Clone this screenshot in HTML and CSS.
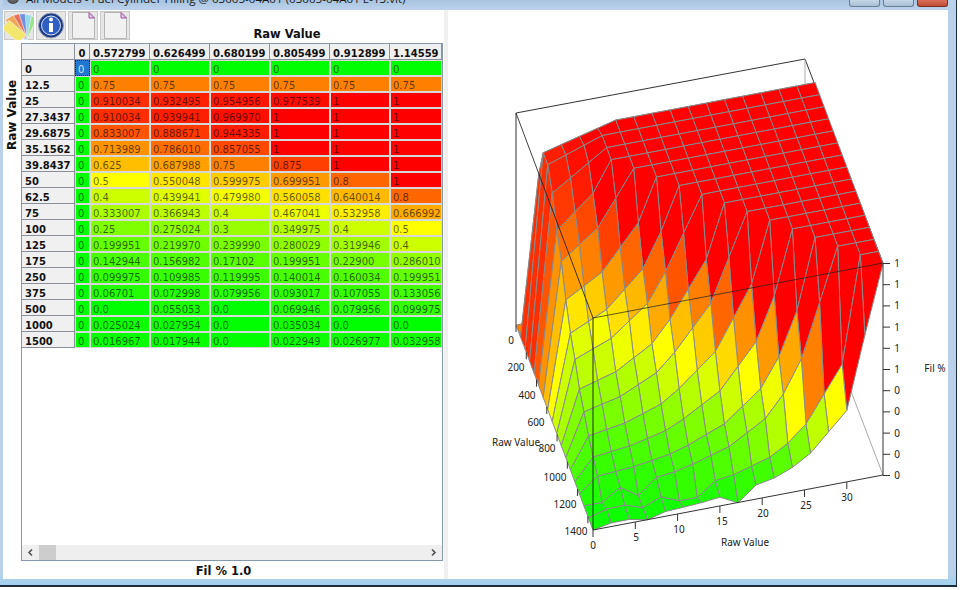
FILE: index.html
```html
<!DOCTYPE html>
<html lang="en">
<head>
    <meta charset="UTF-8">
    <title>All Models - Fuel Cylinder Filling</title>
    <link rel="stylesheet" href="styles.css">
</head>
<body>
    <div class="window">
        <div class="titlebar">
            <span class="app-icon"></span>
            <span class="title-text">All Models - Fuel Cylinder Filling @ 03005-04A01 (03005-04A01 E-13.vlt)</span>
            <span class="win-buttons">
                <span class="win-btn"></span>
                <span class="win-btn"></span>
                <span class="win-btn close"></span>
            </span>
        </div>
        <div class="client">
            <div class="left-pane">
                <div class="top-row">
                    <div class="toolbar">
                        <div class="tool-btn">
                            <svg width="30" height="29" viewBox="0 0 30 29">
                                <g stroke="#f4f4f4" stroke-width="0.6">
                                    <rect x="14" y="3" width="9" height="25" fill="#98e48a" transform="rotate(24 18 28)"/>
                                    <rect x="14" y="3" width="9" height="25" fill="#94d8ee" transform="rotate(10 18 28)"/>
                                    <rect x="14" y="3" width="9" height="25" fill="#6f8fe0" transform="rotate(-4 18 28)"/>
                                    <rect x="14" y="3" width="9" height="25" fill="#e8705c" transform="rotate(-18 18 28)"/>
                                    <rect x="14" y="3" width="9" height="25" fill="#f0a858" transform="rotate(-32 18 28)"/>
                                    <rect x="13" y="6" width="11" height="22" fill="#f2e66c" transform="rotate(-50 18 28)"/>
                                </g>
                            </svg>
                        </div>
                        <div class="tool-btn">
                            <svg width="30" height="29" viewBox="0 0 30 29">
                                <circle cx="15" cy="14.5" r="12.5" fill="#1c3a86" stroke="#9aa6bc"/>
                                <circle cx="15" cy="14.5" r="9.5" fill="#2f5fc4" stroke="#dfe6f2"/>
                                <circle cx="15" cy="8.5" r="2" fill="#fff"/>
                                <rect x="13" y="12" width="4" height="9" fill="#fff"/>
                            </svg>
                        </div>
                        <div class="tool-btn">
                            <svg width="30" height="29" viewBox="0 0 30 29">
                                <path d="M4.5 1.5H21L26.5 7V27.5H4.5Z" fill="#f1f1f1" stroke="#b5b5b5"/>
                                <path d="M21 1.5V7H26.5Z" fill="#e8c8e8" stroke="#a050a0"/>
                            </svg>
                        </div>
                        <div class="tool-btn">
                            <svg width="30" height="29" viewBox="0 0 30 29">
                                <path d="M4.5 1.5H21L26.5 7V27.5H4.5Z" fill="#f1f1f1" stroke="#b5b5b5"/>
                                <path d="M21 1.5V7H26.5Z" fill="#e8c8e8" stroke="#a050a0"/>
                            </svg>
                        </div>
                    </div>
                    <div class="axis-title">Raw Value</div>
                </div>
                <div class="middle-row">
                    <div class="side-title">Raw Value</div>
                    <div class="table-box">
                        <div class="table-scroll">
                            <table class="grid">
                                <colgroup>
                                    <col class="col-head">
                                    <col class="col-zero">
                                    <col class="col-val">
                                    <col class="col-val">
                                    <col class="col-val">
                                    <col class="col-val">
                                    <col class="col-val">
                                    <col class="col-last">
                                </colgroup>
                                <thead>
                                    <tr>
                                        <th></th>
                                        <th class="center">0</th>
                                        <th>0.572799</th>
                                        <th>0.626499</th>
                                        <th>0.680199</th>
                                        <th>0.805499</th>
                                        <th>0.912899</th>
                                        <th>1.14559</th>
                                    </tr>
                                </thead>
                                <tbody id="gridBody"></tbody>
                            </table>
                        </div>
                        <div class="hscroll">
                            <span class="arrow">
                                <svg width="9" height="9" viewBox="0 0 9 9"><path d="M6 1.5L3 4.5L6 7.5" fill="none" stroke="#505050" stroke-width="1.6"/></svg>
                            </span>
                            <span class="thumb"></span>
                            <span class="track"></span>
                            <span class="arrow">
                                <svg width="9" height="9" viewBox="0 0 9 9"><path d="M3 1.5L6 4.5L3 7.5" fill="none" stroke="#505050" stroke-width="1.6"/></svg>
                            </span>
                        </div>
                    </div>
                </div>
                <div class="footer-title">Fil % 1.0</div>
            </div>
            <div class="splitter"></div>
            <div class="chart-pane">
                <svg id="chart" class="chart" width="500" height="569" viewBox="448 10 500 569"></svg>
            </div>
        </div>
    </div>
    <script src="script.js"></script>
</body>
</html>
```

FILE: styles.css
```css
html, body {
    margin: 0;
    padding: 0;
    background-color: #fff;
}
body {
    width: 960px;
    height: 590px;
    overflow: hidden;
    font-family: "DejaVu Sans", sans-serif;
}
.window {
    box-sizing: border-box;
    width: 957px;
    height: 587px;
    display: flex;
    flex-direction: column;
    padding: 0 8px 6px 3px;
    background: linear-gradient(to bottom, #b9d1ea 98%, #9fd2f0);
    border-right: 1px solid #1d2b38;
    border-bottom: 2px solid #1d2b38;
}
.titlebar {
    height: 10px;
    flex: none;
    display: flex;
    overflow: hidden;
    background: linear-gradient(to bottom, #a9c4e0, #bcd3ea);
}
.app-icon {
    flex: none;
    width: 12px;
    height: 12px;
    margin: -8px 7px 0 4px;
    border-radius: 50%;
    background: radial-gradient(circle at 50% 35%, #9a9a9a, #2c2c2c);
}
.title-text {
    flex: 1;
    margin-top: -8px;
    font-family: "Open Sans", sans-serif;
    font-size: 11.6px;
    line-height: 14px;
    white-space: nowrap;
    color: #1a1a1a;
}
.win-buttons {
    flex: none;
    display: flex;
    gap: 3px;
}
.win-btn {
    width: 31px;
    height: 7px;
    box-sizing: border-box;
    border: 1px solid #6b7f96;
    border-top: none;
    border-radius: 0 0 3px 3px;
    background: linear-gradient(to bottom, #c5d6e8, #a9bfd6);
}
.win-btn.close {
    border-color: #7c3026;
    background: linear-gradient(to bottom, #d9705c, #c04a36);
}
.client {
    flex: 1;
    display: flex;
    min-height: 0;
    background-color: #fff;
}
.left-pane {
    width: 441px;
    flex: none;
    display: flex;
    flex-direction: column;
}
.top-row {
    height: 33px;
    flex: none;
    display: flex;
}
.toolbar {
    display: flex;
    gap: 2px;
    padding: 1px 0 0 1px;
}
.tool-btn {
    width: 30px;
    height: 29px;
    background-color: #e6e6e6;
    box-shadow: inset 0 0 0 1px #c8c8c8;
}
.tool-btn svg {
    display: block;
}
.axis-title {
    flex: 1;
    padding: 17px 0 0 0;
    text-align: center;
    font-size: 11.5px;
    font-weight: bold;
    line-height: 14px;
    color: #111;
}
.middle-row {
    flex: 1;
    display: flex;
    min-height: 0;
}
.side-title {
    width: 18px;
    flex: none;
    height: 107px;
    line-height: 18px;
    writing-mode: vertical-rl;
    transform: rotate(180deg);
    font-size: 12px;
    font-weight: bold;
    color: #111;
}
.table-box {
    box-sizing: border-box;
    width: 422px;
    flex: none;
    display: flex;
    flex-direction: column;
    border: 1px solid #8598ac;
}
.table-scroll {
    flex: 1;
    min-height: 0;
    overflow: hidden;
}
.grid {
    table-layout: fixed;
    width: 420px;
    border-collapse: separate;
    border-spacing: 0;
    font-size: 10px;
}
.col-head { width: 53px; }
.col-zero { width: 15px; }
.col-val { width: 60px; }
.col-last { width: 52px; }
.grid th {
    box-sizing: border-box;
    height: 16px;
    padding: 4px 0 0 3px;
    line-height: 11px;
    vertical-align: top;
    text-align: left;
    font-weight: bold;
    color: #111;
    background-color: #f0f0f0;
    border-right: 1px solid #8a9099;
    border-bottom: 1px solid #8a9099;
    overflow: hidden;
    white-space: nowrap;
}
.grid th.center {
    padding-left: 0;
    text-align: center;
}
.grid td {
    box-sizing: border-box;
    height: 16px;
    padding: 3px 0 0 2px;
    line-height: 11px;
    vertical-align: top;
    color: rgba(0, 0, 0, 0.62);
    border: 1px solid #d8d8d8;
    overflow: hidden;
    white-space: nowrap;
}
.grid td.selected {
    color: #cfe4ff;
    background-color: #1f78d1 !important;
    border: 1px dotted #0b2a55;
}
.hscroll {
    height: 15px;
    flex: none;
    display: flex;
    align-items: center;
    background-color: #efefef;
}
.arrow {
    width: 17px;
    height: 15px;
    flex: none;
    display: flex;
    align-items: center;
    justify-content: center;
}
.thumb {
    width: 17px;
    height: 15px;
    flex: none;
    background-color: #cdcdcd;
}
.track {
    flex: 1;
}
.footer-title {
    height: 18px;
    flex: none;
    text-align: center;
    font-size: 11.5px;
    font-weight: bold;
    line-height: 21px;
    color: #111;
}
.splitter {
    width: 4px;
    flex: none;
    background-color: #f0f0f0;
}
.chart-pane {
    flex: 1;
    min-width: 0;
}
.chart {
    display: block;
}
.chart text {
    font-family: "Noto Sans", sans-serif;
    font-size: 10px;
    fill: #222;
}
```

FILE: script.js
```js
// table rows, first value is the row header
const rows = [
    ['0', '0', '0', '0', '0', '0', '0'],
    ['12.5', '0.75', '0.75', '0.75', '0.75', '0.75', '0.75'],
    ['25', '0.910034', '0.932495', '0.954956', '0.977539', '1', '1'],
    ['27.3437', '0.910034', '0.939941', '0.969970', '1', '1', '1'],
    ['29.6875', '0.833007', '0.888671', '0.944335', '1', '1', '1'],
    ['35.1562', '0.713989', '0.786010', '0.857055', '1', '1', '1'],
    ['39.8437', '0.625', '0.687988', '0.75', '0.875', '1', '1'],
    ['50', '0.5', '0.550048', '0.599975', '0.699951', '0.8', '1'],
    ['62.5', '0.4', '0.439941', '0.479980', '0.560058', '0.640014', '0.8'],
    ['75', '0.333007', '0.366943', '0.4', '0.467041', '0.532958', '0.666992'],
    ['100', '0.25', '0.275024', '0.3', '0.349975', '0.4', '0.5'],
    ['125', '0.199951', '0.219970', '0.239990', '0.280029', '0.319946', '0.4'],
    ['175', '0.142944', '0.156982', '0.17102', '0.199951', '0.22900', '0.286010'],
    ['250', '0.099975', '0.109985', '0.119995', '0.140014', '0.160034', '0.199951'],
    ['375', '0.06701', '0.072998', '0.079956', '0.093017', '0.107055', '0.133056'],
    ['500', '0.0', '0.055053', '0.0', '0.069946', '0.079956', '0.099975'],
    ['1000', '0.025024', '0.027954', '0.0', '0.035034', '0.0', '0.0'],
    ['1500', '0.016967', '0.017944', '0.0', '0.022949', '0.026977', '0.032958']
];

// multipliers for the columns the table has scrolled off
const moreCols = [2.5, 3, 4, 5, 7, 10, 15, 20, 40, 60];
const NS = 'http://www.w3.org/2000/svg';

function heatColor(z) {
    const r = z < 0.5 ? Math.round(510 * z) : 255;
    const g = z < 0.5 ? 255 : Math.round(510 * (1 - z));
    return `rgb(${r},${g},0)`;
}

function buildTable() {
    const body = document.getElementById('gridBody');
    rows.forEach((row, j) => {
        const tr = document.createElement('tr');
        const th = document.createElement('th');
        th.textContent = row[0];
        tr.appendChild(th);

        const zero = document.createElement('td');
        zero.textContent = '0';
        zero.style.backgroundColor = heatColor(0);
        if (j === 0) zero.className = 'selected';
        tr.appendChild(zero);

        row.slice(1).forEach(val => {
            const td = document.createElement('td');
            td.textContent = val;
            td.style.backgroundColor = heatColor(parseFloat(val));
            tr.appendChild(td);
        });
        body.appendChild(tr);
    });
}

function surfaceValue(i, j) {
    if (i === 0) return 0;
    if (i <= 6) return parseFloat(rows[j][i]);
    if (j === 0) return 0;
    if (j === 1) return 0.75;
    if (j === 17 && i === 8) return 0;
    let base = parseFloat(rows[j][1]);
    if (j === 15) base = 0.05;
    return Math.min(1, base * moreCols[i - 7]);
}

function project(u, v, z) {
    return [516 + 290 * u + 77 * v, 325 - 54.5 * u + 205 * v - 212 * z];
}

function addSvg(parent, tag, attrs, text) {
    const el = document.createElementNS(NS, tag);
    Object.keys(attrs).forEach(k => el.setAttribute(k, attrs[k]));
    if (text !== undefined) el.textContent = text;
    parent.appendChild(el);
    return el;
}

function line(svg, x1, y1, x2, y2, color) {
    addSvg(svg, 'line', { x1, y1, x2, y2, stroke: color, 'stroke-width': 1 });
}

function label(svg, x, y, text) {
    addSvg(svg, 'text', { x, y: y + 3.5, 'text-anchor': 'middle' }, text);
}

function buildChart() {
    const svg = document.getElementById('chart');

    // back of the box
    line(svg, 516, 113, 805, 59, '#333');
    line(svg, 805, 59, 883, 263, '#333');
    line(svg, 516, 113, 516, 325, '#333');
    line(svg, 805, 59, 805, 271, '#aaa');
    line(svg, 883, 475, 805, 271, '#aaa');

    // surface, drawn far to near, each cell takes the colour of its highest corner
    const nodeAt = (i, j) => project(i / 16, j / 17, surfaceValue(i, j));
    for (let j = 0; j < 17; j++) {
        for (let i = 15; i >= 0; i--) {
            const corners = [[i, j], [i + 1, j], [i + 1, j + 1], [i, j + 1]];
            const pts = corners.map(c => nodeAt(c[0], c[1]).map(n => n.toFixed(1)).join(',')).join(' ');
            const top = Math.max(...corners.map(c => surfaceValue(c[0], c[1])));
            addSvg(svg, 'polygon', { points: pts, fill: heatColor(top), stroke: '#8a8a8a', 'stroke-width': 1 });
        }
    }

    // front of the box, over the surface
    line(svg, 516, 113, 593, 318, 'rgba(30,30,30,0.85)');
    line(svg, 593, 318, 883, 263, 'rgba(30,30,30,0.7)');
    line(svg, 593, 318, 593, 530, 'rgba(20,20,20,0.9)');
    line(svg, 593, 530, 883, 475, '#333');
    line(svg, 883, 263, 883, 475, '#333');

    // fill axis
    const fillLabels = ['1', '1', '1', '1', '1', '1', '0', '0', '0', '0', '0'];
    fillLabels.forEach((t, k) => {
        const y = 263.5 + k * 21.2;
        line(svg, 883, y, 890, y, '#333');
        label(svg, 897, y, t);
    });

    // row axis
    const rowLabels = [[511, 340], [516, 367], [527, 395], [536, 422], [547, 448], [555, 477], [565, 504], [576, 531]];
    rowLabels.forEach((p, k) => {
        const x = 516 + 10.27 * k;
        const y = 325 + 27.33 * k;
        line(svg, x, y, x, y + 7, '#333');
        label(svg, p[0], p[1], String(k * 200));
    });

    // column axis
    const colLabels = [[593, 545], [636, 537], [679, 529], [722, 521], [763, 513], [806, 505], [847, 497]];
    colLabels.forEach((p, k) => {
        const x = 593 + 42.3 * k;
        const y = 530 - 8 * k;
        line(svg, x, y, x, y + 7, '#333');
        label(svg, p[0], p[1], String(k * 5));
    });

    label(svg, 516, 442, 'Raw Value');
    label(svg, 745, 542, 'Raw Value');
    label(svg, 935, 368, 'Fil %');
}

buildTable();
buildChart();
```
